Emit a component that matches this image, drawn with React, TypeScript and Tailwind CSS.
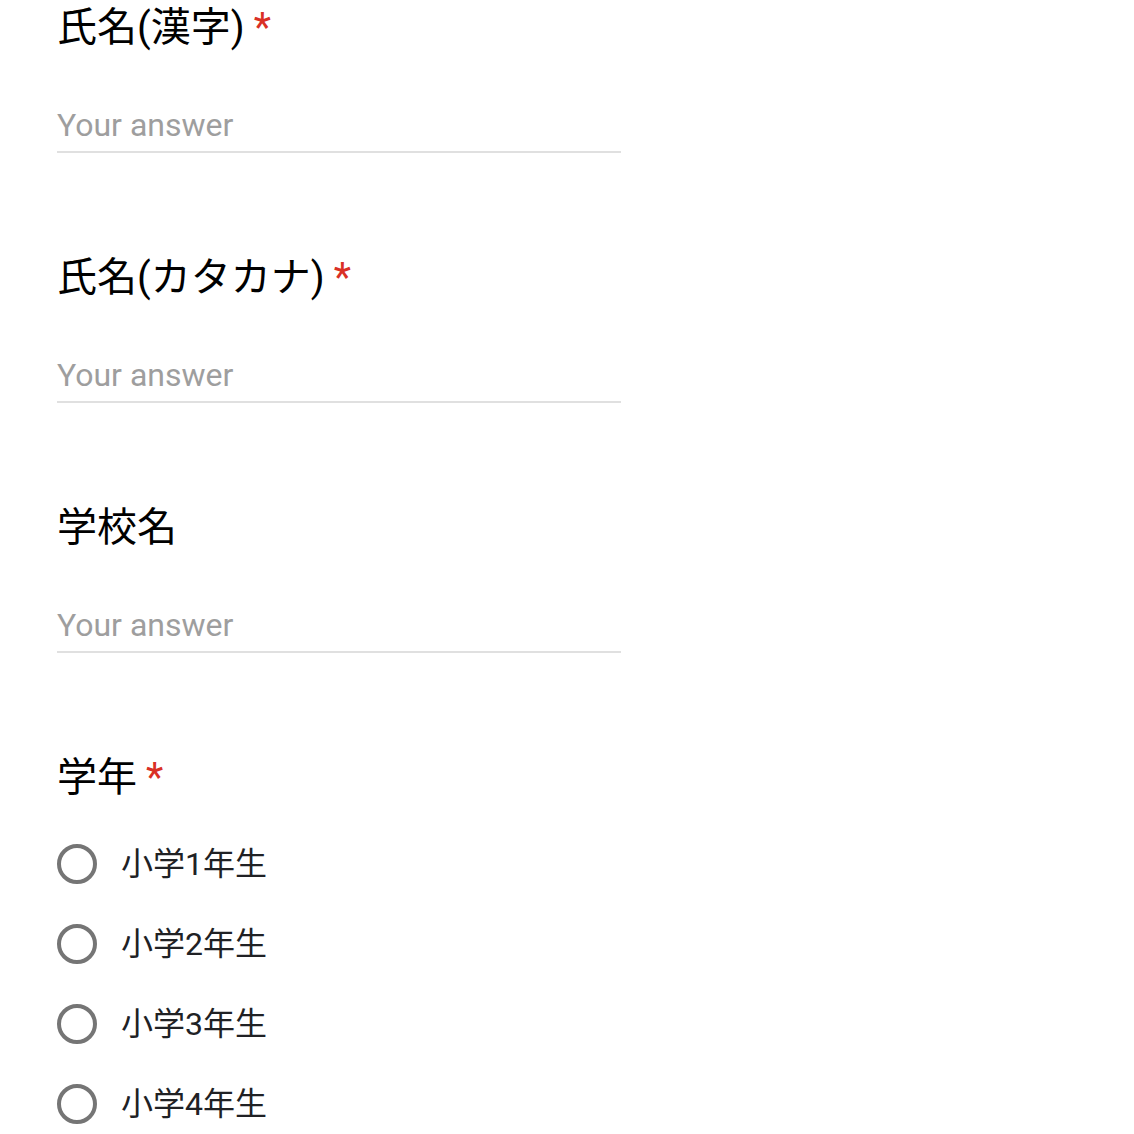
import React from 'react';

const font = { fontFamily: 'Roboto, "Noto Sans CJK JP", sans-serif' };

const Title: React.FC<{ text: string; required?: boolean }> = ({ text, required }) => (
  <div className="h-[56px] flex items-center text-[40px] leading-[56px] text-black">
    <span>{text}</span>
    {required && <span className="ml-[9px] text-[#d93025]">*</span>}
  </div>
);

const TextQuestion: React.FC<{ title: string; required?: boolean }> = ({ title, required }) => (
  <div className="h-[250px] flex flex-col">
    <Title text={title} required={required} />
    <div className="mt-[49px] w-[564px] border-b-2 border-[#e0e0e0] pb-[6px]">
      <div className="h-[40px] leading-[40px] text-[32px] text-[#9e9e9e]">Your answer</div>
    </div>
  </div>
);

const grades = ['小学1年生', '小学2年生', '小学3年生', '小学4年生'];

export default function App() {
  return (
    <div className="w-[1134px] h-[1134px] bg-white overflow-hidden pl-[57px]" style={font}>
      <TextQuestion title="氏名(漢字)" required />
      <TextQuestion title="氏名(カタカナ)" required />
      <TextQuestion title="学校名" />
      <div className="flex flex-col">
        <Title text="学年" required />
        <div className="mt-[18px] flex flex-col">
          {grades.map((g) => (
            <div key={g} className="h-[80px] flex items-center">
              <div className="w-[40px] h-[40px] rounded-full border-[4px] border-[#757575]" />
              <span className="ml-[24px] text-[32px] text-[#202124]">{g}</span>
            </div>
          ))}
        </div>
      </div>
    </div>
  );
}
